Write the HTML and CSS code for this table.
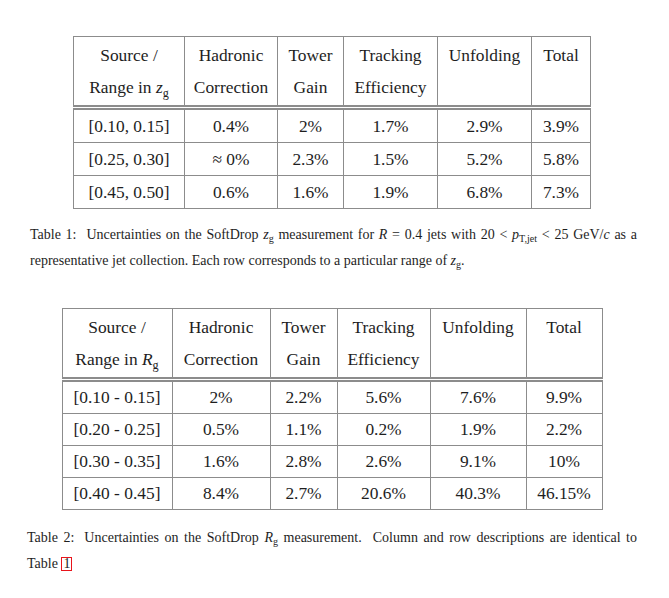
FILE: index.html
```html
<!DOCTYPE html>
<html>
<head>
<meta charset="utf-8">
<link rel="stylesheet" href="styles.css">
</head>
<body>
<div class="page">
  <table class="unc t1">
    <colgroup><col><col><col><col><col><col></colgroup>
    <thead>
      <tr>
        <th>Source /<br>Range in <i>z</i><sub>g</sub></th>
        <th>Hadronic<br>Correction</th>
        <th>Tower<br>Gain</th>
        <th>Tracking<br>Efficiency</th>
        <th>Unfolding</th>
        <th>Total</th>
      </tr>
    </thead>
    <tbody>
      <tr><td>[0.10, 0.15]</td><td>0.4%</td><td>2%</td><td>1.7%</td><td>2.9%</td><td>3.9%</td></tr>
      <tr><td>[0.25, 0.30]</td><td>&#8776; 0%</td><td>2.3%</td><td>1.5%</td><td>5.2%</td><td>5.8%</td></tr>
      <tr><td>[0.45, 0.50]</td><td>0.6%</td><td>1.6%</td><td>1.9%</td><td>6.8%</td><td>7.3%</td></tr>
    </tbody>
  </table>
  <p class="caption c1"><span class="lbl">Table 1:</span>Uncertainties on the SoftDrop <i>z</i><sub>g</sub> measurement for <i>R</i> = 0.4 jets with 20 &lt; <i>p</i><sub>T,jet</sub> &lt; 25 GeV/<i>c</i> as a representative jet collection. Each row corresponds to a particular range of <i>z</i><sub>g</sub>.</p>

  <table class="unc t2">
    <colgroup><col><col><col><col><col><col></colgroup>
    <thead>
      <tr>
        <th>Source /<br>Range in <i>R</i><sub>g</sub></th>
        <th>Hadronic<br>Correction</th>
        <th>Tower<br>Gain</th>
        <th>Tracking<br>Efficiency</th>
        <th>Unfolding</th>
        <th>Total</th>
      </tr>
    </thead>
    <tbody>
      <tr><td>[0.10 - 0.15]</td><td>2%</td><td>2.2%</td><td>5.6%</td><td>7.6%</td><td>9.9%</td></tr>
      <tr><td>[0.20 - 0.25]</td><td>0.5%</td><td>1.1%</td><td>0.2%</td><td>1.9%</td><td>2.2%</td></tr>
      <tr><td>[0.30 - 0.35]</td><td>1.6%</td><td>2.8%</td><td>2.6%</td><td>9.1%</td><td>10%</td></tr>
      <tr><td>[0.40 - 0.45]</td><td>8.4%</td><td>2.7%</td><td>20.6%</td><td>40.3%</td><td>46.15%</td></tr>
    </tbody>
  </table>
  <p class="caption c2"><span class="lbl">Table 2:</span>Uncertainties on the SoftDrop <i>R</i><sub>g</sub> measurement.&nbsp; Column and row descriptions are identical to Table <span class="ref">1</span></p>
</div>
</body>
</html>
```

FILE: styles.css
```css
html, body {
  margin: 0;
  padding: 0;
  background: #ffffff;
}

body {
  font-family: "Liberation Serif", "Times New Roman", serif;
  color: #1e1e1e;
}

.page {
  width: 610px;
  padding: 36px 0 0 27px;
}

.unc {
  border-collapse: collapse;
  table-layout: fixed;
  margin: 0 auto;
  font-size: 17.4px;
}

.unc th,
.unc td {
  border: 1px solid #8c8c8c;
  text-align: center;
  padding: 0;
  white-space: nowrap;
}

.unc th {
  font-weight: normal;
  vertical-align: top;
  line-height: 32px;
  padding: 2px 0 2px 0;
  border-bottom: 5px double #8c8c8c;
}

.unc td {
  line-height: 32px;
  height: 32px;
}

.unc sub {
  font-size: 0.7em;
  vertical-align: -0.3em;
  line-height: 0;
}

.t1 {
  width: 517px;
}
.t1 col:nth-child(1) { width: 111px; }
.t1 col:nth-child(2) { width: 93px; }
.t1 col:nth-child(3) { width: 66px; }
.t1 col:nth-child(4) { width: 94px; }
.t1 col:nth-child(5) { width: 94px; }
.t1 col:nth-child(6) { width: 59px; }

.t2 {
  width: 540px;
}
.t2 col:nth-child(1) { width: 110px; }
.t2 col:nth-child(2) { width: 98px; }
.t2 col:nth-child(3) { width: 67px; }
.t2 col:nth-child(4) { width: 93px; }
.t2 col:nth-child(5) { width: 96px; }
.t2 col:nth-child(6) { width: 76px; }

.t2 td {
  line-height: 31px;
  height: 31px;
}

.caption {
  font-size: 14px;
  line-height: 26px;
  text-align: justify;
  margin: 0;
}

.caption sub {
  font-size: 0.72em;
  vertical-align: -0.3em;
  line-height: 0;
}

.caption .lbl {
  margin-right: 10px;
}

.c1 {
  margin-top: 13px;
  margin-bottom: 34px;
  padding-left: 3px;
}

.c2 {
  margin-top: 15px;
}

.ref {
  display: inline-block;
  line-height: 12px;
  padding: 0 1px;
  border: 1px solid #e8141b;
}
```
